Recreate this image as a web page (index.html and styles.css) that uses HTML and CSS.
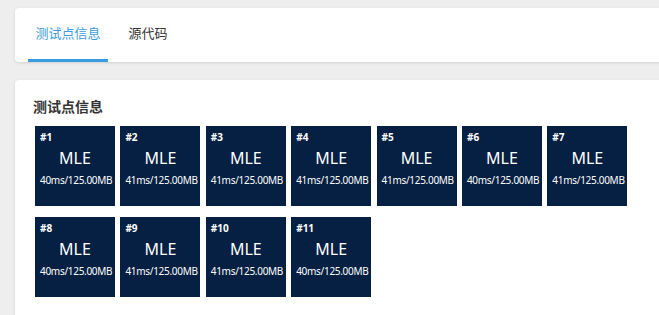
FILE: index.html
```html
<!DOCTYPE html>
<html lang="zh">
<head>
  <meta charset="UTF-8">
  <title>测试点信息</title>
  <link rel="stylesheet" href="styles.css">
</head>
<body>

  <div class="page">
    <div class="card tabs-card">
      <div class="tabs">
        <div class="tab active">测试点信息</div>
        <div class="tab">源代码</div>
      </div>
    </div>

    <div class="card cases-card">
      <h3 class="cases-title">测试点信息</h3>
      <div class="cases">
        <div class="case"><span class="case-no">#1</span><span class="case-status">MLE</span><span class="case-info">40ms/125.00MB</span></div>
        <div class="case"><span class="case-no">#2</span><span class="case-status">MLE</span><span class="case-info">41ms/125.00MB</span></div>
        <div class="case"><span class="case-no">#3</span><span class="case-status">MLE</span><span class="case-info">41ms/125.00MB</span></div>
        <div class="case"><span class="case-no">#4</span><span class="case-status">MLE</span><span class="case-info">41ms/125.00MB</span></div>
        <div class="case"><span class="case-no">#5</span><span class="case-status">MLE</span><span class="case-info">41ms/125.00MB</span></div>
        <div class="case"><span class="case-no">#6</span><span class="case-status">MLE</span><span class="case-info">40ms/125.00MB</span></div>
        <div class="case"><span class="case-no">#7</span><span class="case-status">MLE</span><span class="case-info">41ms/125.00MB</span></div>
        <div class="case"><span class="case-no">#8</span><span class="case-status">MLE</span><span class="case-info">40ms/125.00MB</span></div>
        <div class="case"><span class="case-no">#9</span><span class="case-status">MLE</span><span class="case-info">41ms/125.00MB</span></div>
        <div class="case"><span class="case-no">#10</span><span class="case-status">MLE</span><span class="case-info">41ms/125.00MB</span></div>
        <div class="case"><span class="case-no">#11</span><span class="case-status">MLE</span><span class="case-info">40ms/125.00MB</span></div>
      </div>
    </div>
  </div>

</body>
</html>
```

FILE: styles.css
```css
body {
  margin: 0;
  background: #eeeeee;
  font-family: "Noto Sans", "Noto Sans CJK SC", sans-serif;
  color: #333;
  overflow: hidden;
}

.page {
  padding: 8px 0 0 15px;
  margin-right: -20px;
}

.card {
  background: #fff;
  border-radius: 4px;
  box-shadow: 0 1px 3px rgba(0, 0, 0, 0.12);
}

.tabs-card {
  height: 54px;
  margin-bottom: 18px;
}

.tabs {
  display: flex;
  gap: 13px;
  padding-left: 13px;
  height: 100%;
}

.tab {
  display: flex;
  align-items: center;
  padding: 0 7.5px 2px;
  font-size: 13px;
  color: #333;
  border-bottom: 3px solid transparent;
  box-sizing: border-box;
}

.tab.active {
  color: #3a9de2;
  border-bottom-color: #3a9de2;
}

.cases-card {
  padding: 18px 0 30px 18px;
}

.cases-title {
  margin: 0 0 10px;
  font-size: 14px;
  line-height: 18px;
  font-weight: bold;
  color: #333;
}

.cases {
  display: flex;
  flex-wrap: wrap;
  column-gap: 5.4px;
  row-gap: 11px;
  padding-left: 2px;
  width: 620px;
}

.case {
  width: 80px;
  height: 80px;
  background: #052042;
  color: #fff;
  display: flex;
  flex-direction: column;
  box-sizing: border-box;
  padding: 4px 0 0 5px;
}

.case-no {
  font-size: 10px;
  font-weight: bold;
  line-height: 14px;
}

.case-status {
  font-size: 16px;
  line-height: 22px;
  text-align: center;
  padding-right: 5px;
  margin-top: 3px;
}

.case-info {
  font-size: 10px;
  line-height: 14px;
  letter-spacing: -0.3px;
  text-align: center;
  padding-right: 5px;
  margin-top: 4px;
}
```
